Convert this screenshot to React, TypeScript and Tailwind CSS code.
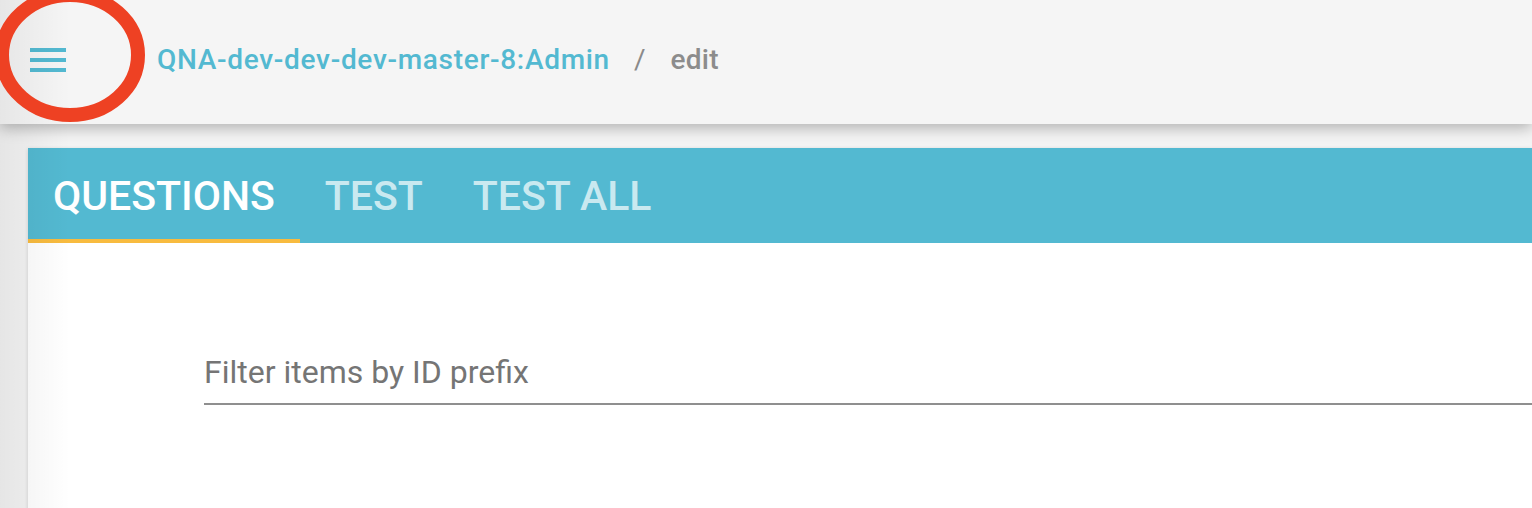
import React from "react";

const tabs = ["QUESTIONS", "TEST", "TEST ALL"];

export default function App() {
  return (
    <div className="relative h-[508px] w-full overflow-hidden bg-[#f4f4f4] font-['Roboto',sans-serif]">
      {/* HEADER */}
      <header className="relative z-10 flex h-[124px] items-center bg-[#f5f5f5] pb-[4px] shadow-[0_4px_14px_rgba(0,0,0,0.28)]">
        <button className="ml-[30px] flex h-[24px] w-[36px] flex-col justify-between">
          <span className="block h-[4px] w-full bg-[#53b9d1]" />
          <span className="block h-[4px] w-full bg-[#53b9d1]" />
          <span className="block h-[4px] w-full bg-[#53b9d1]" />
        </button>
        <nav className="ml-[91px] flex items-center text-[28px]">
          <span className="font-medium tracking-[0.7px] text-[#53b9d1]">QNA-dev-dev-dev-master-8:Admin</span>
          <span className="ml-[24px] text-[#8a8a8a]">/</span>
          <span className="ml-[25px] font-medium tracking-[0.3px] text-[#8c8c8c]">edit</span>
        </nav>
      </header>

      {/* CARD */}
      <main className="ml-[28px] mt-[24px] h-[400px] bg-white shadow-[0_1px_4px_rgba(0,0,0,0.15)]">
        <div className="flex h-[95px] bg-[#53b9d1]">
          {tabs.map((t, i) => (
            <div
              key={t}
              className={`flex items-center px-[25px] pt-[2px] text-[41px] font-medium ${
                i === 0
                  ? "border-b-[4px] border-[#f8bb3f] pt-[6px] text-white"
                  : "text-white/70"
              }`}
            >
              {t}
            </div>
          ))}
        </div>

        <div className="pl-[176px] pt-[104px]">
          <input
            placeholder="Filter items by ID prefix"
            className="h-[58px] w-full border-b-2 border-[#8f8f8f] bg-transparent pb-[6px] text-[32px] text-[#333] outline-none placeholder:text-[#757575]"
          />
        </div>
      </main>

      {/* LEFT EDGE SHADE */}
      <div className="pointer-events-none absolute inset-y-0 left-0 z-20 w-[70px] bg-gradient-to-r from-black/[0.06] to-transparent" />

      {/* ANNOTATION RING */}
      <svg className="pointer-events-none absolute left-0 top-0 z-30" width="160" height="130">
        <ellipse cx="70" cy="55" rx="68" ry="60" fill="none" stroke="#ee4123" strokeWidth="14" />
      </svg>
    </div>
  );
}
